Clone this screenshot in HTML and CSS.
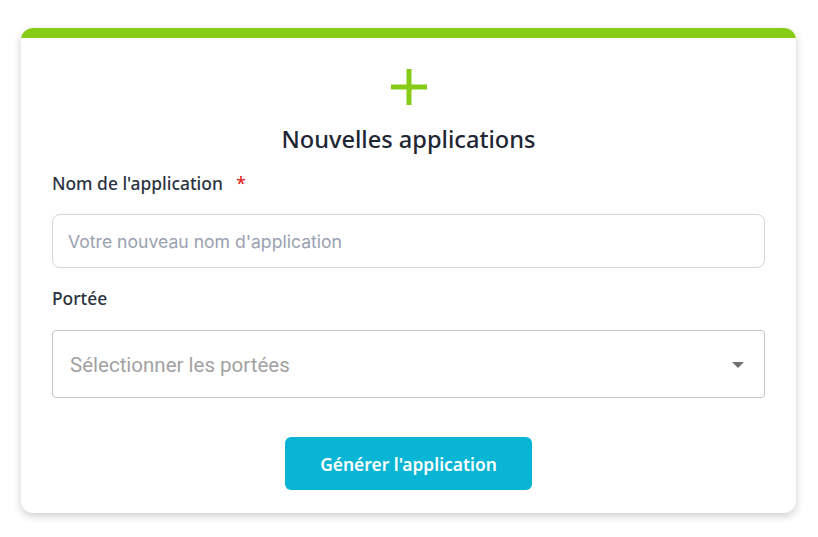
FILE: index.html
```html
<!DOCTYPE html>
<html lang="fr">
<head>
<meta charset="utf-8">
<title>Nouvelles applications</title>
<link rel="stylesheet" href="styles.css">
</head>
<body>
<div class="card">
  <div class="card-bar"></div>
  <div class="card-body">
    <div class="icon">
      <svg width="36" height="36" viewBox="0 0 36 36"><path d="M18 0V36M0 18H36" stroke="#86cc17" stroke-width="5" fill="none"/></svg>
    </div>
    <h1 class="title">Nouvelles applications</h1>
    <label class="label">Nom de l'application <span class="req">*</span></label>
    <div class="input"><span class="ph">Votre nouveau nom d'application</span></div>
    <label class="label label-2">Portée</label>
    <div class="select">
      <span class="ph-select">Sélectionner les portées</span>
      <span class="caret"></span>
    </div>
    <div class="actions">
      <button class="btn">Générer l'application</button>
    </div>
  </div>
</div>
</body>
</html>
```

FILE: styles.css
```css
html, body {
  margin: 0;
  padding: 0;
  background: #ffffff;
  min-height: 537px;
}
body {
  padding: 28px 22px 0 21px;
  box-sizing: border-box;
  font-family: "Noto Sans", "Open Sans", sans-serif;
}
.card {
  width: 775px;
  height: 485px;
  background: #fff;
  border-radius: 12px;
  overflow: hidden;
  box-shadow: 0 3px 9px rgba(0,0,0,0.2);
  box-sizing: border-box;
}
.card-bar {
  height: 10px;
  background: #86cc17;
}
.card-body {
  padding: 31px 31px 0 31px;
  display: flex;
  flex-direction: column;
}
.icon {
  display: flex;
  justify-content: center;
  height: 36px;
}
.icon svg { display: block; }
.title {
  margin: 18px 0 0;
  text-align: center;
  font-size: 23.6px;
  line-height: 32px;
  font-weight: 500;
  color: #1e2533;
}
.label {
  display: block;
  margin-top: 16px;
  font-size: 17.4px;
  line-height: 24px;
  font-weight: 500;
  color: #2b3240;
}
.label-2 { margin-top: 18px; }
.req {
  color: #e02424;
  margin-left: 9px;
}
.input {
  margin-top: 19px;
  height: 54px;
  box-sizing: border-box;
  border: 1px solid #d3d6dc;
  border-radius: 8px;
  display: flex;
  align-items: center;
  padding-left: 15px;
}
.ph {
  font-family: Inter, "Noto Sans", sans-serif;
  font-size: 17.6px;
  color: #9aa1b0;
}
.select {
  margin-top: 20px;
  height: 68px;
  box-sizing: border-box;
  border: 1px solid #c4c4c4;
  border-radius: 4px;
  display: flex;
  align-items: center;
  justify-content: space-between;
  padding: 1px 20px 0 17px;
}
.ph-select {
  font-family: Roboto, sans-serif;
  font-size: 20.5px;
  color: #a2a2a2;
}
.caret {
  width: 0;
  height: 0;
  border-left: 6px solid transparent;
  border-right: 6px solid transparent;
  border-top: 6px solid #707070;
}
.actions {
  display: flex;
  justify-content: center;
  margin-top: 39px;
}
.btn {
  width: 247px;
  height: 53px;
  border: none;
  border-radius: 6px;
  background: #09b5d4;
  color: #fff;
  font-family: "Noto Sans", "Open Sans", sans-serif;
  font-size: 17.4px;
  font-weight: 600;
  cursor: pointer;
}
```
